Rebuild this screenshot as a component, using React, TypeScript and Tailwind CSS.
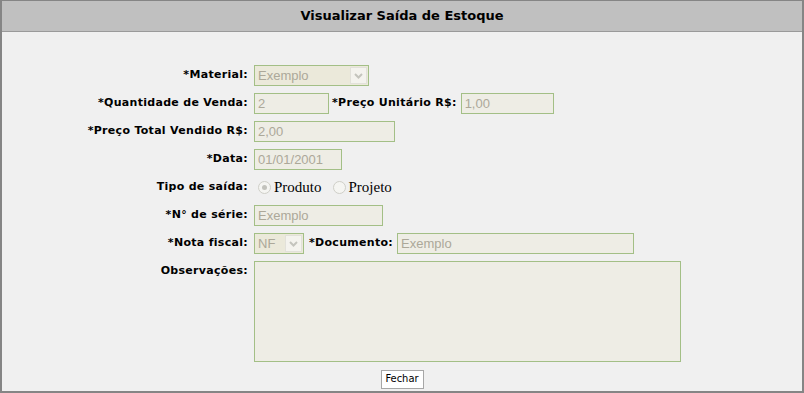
import React from "react";

const labelCls =
  "w-[246px] shrink-0 text-right font-bold text-[11px] tracking-[0.3px] text-black";
const lblFont = { fontFamily: '"DejaVu Sans", Verdana, sans-serif' };
const inFont = { fontFamily: '"Liberation Sans", Arial, sans-serif' };

function Input({ w, value }: { w: number; value: string }) {
  return (
    <div
      className="h-[21px] border border-[#a3bf86] bg-[#eeede5] text-[13px] text-[#aca899] pl-[3px] leading-[19px] overflow-hidden whitespace-nowrap"
      style={{ width: w, ...inFont }}
    >
      {value}
    </div>
  );
}

function Select({ w, value }: { w: number; value: string }) {
  return (
    <div
      className="h-[21px] border border-[#a3bf86] bg-[#ebe9da] flex items-center justify-between pl-[3px] pr-[1px]"
      style={{ width: w, ...inFont }}
    >
      <span className="text-[13px] text-[#aca899] leading-[19px]">{value}</span>
      <div className="w-[17px] h-[17px] bg-[#f4f3ee] border border-[#e2e1da] flex items-center justify-center">
        <svg width="11" height="8" viewBox="0 0 11 8">
          <path d="M2 2 L5.5 5.5 L9 2" fill="none" stroke="#c4c4bd" strokeWidth="2" />
        </svg>
      </div>
    </div>
  );
}

function Radio({ checked, label }: { checked?: boolean; label: string }) {
  return (
    <div className="flex items-center">
      <span className="w-[13px] h-[13px] rounded-full border border-[#cfcfc8] bg-[#f5f5f2] flex items-center justify-center">
        {checked && <span className="w-[5px] h-[5px] rounded-full bg-[#c2c2bc]" />}
      </span>
      <span
        className="ml-[3px] text-[15px] text-black leading-none"
        style={{ fontFamily: '"Liberation Serif", "Times New Roman", serif' }}
      >
        {label}
      </span>
    </div>
  );
}

export default function App() {
  return (
    <div className="w-[804px] h-[393px] bg-[#f0f0f0] border-2 border-t border-[#858585] flex flex-col overflow-hidden">
      <div className="h-[31px] shrink-0 bg-[#c0c0c0] border-b border-[#9a9a9a] flex items-center justify-center">
        <span className="text-[13px] font-bold text-black" style={lblFont}>
          Visualizar Saída de Estoque
        </span>
      </div>
      <div className="flex flex-col gap-[7px] pt-[33px]" style={lblFont}>
        <div className="flex items-center h-[21px]">
          <div className={labelCls}>*Material:</div>
          <div className="ml-[6px]">
            <Select w={115} value="Exemplo" />
          </div>
        </div>
        <div className="flex items-center h-[21px]">
          <div className={labelCls}>*Quantidade de Venda:</div>
          <div className="ml-[6px]">
            <Input w={75} value="2" />
          </div>
          <div className="ml-[3px] font-bold text-[11px] tracking-[0.3px]">*Preço Unitário R$:</div>
          <div className="ml-[4px]">
            <Input w={93} value="1,00" />
          </div>
        </div>
        <div className="flex items-center h-[21px]">
          <div className={labelCls}>*Preço Total Vendido R$:</div>
          <div className="ml-[6px]">
            <Input w={141} value="2,00" />
          </div>
        </div>
        <div className="flex items-center h-[21px]">
          <div className={labelCls}>*Data:</div>
          <div className="ml-[6px]">
            <Input w={88} value="01/01/2001" />
          </div>
        </div>
        <div className="flex items-center h-[21px]">
          <div className={labelCls}>Tipo de saída:</div>
          <div className="ml-[10px] flex items-center gap-[11px]">
            <Radio checked label="Produto" />
            <Radio label="Projeto" />
          </div>
        </div>
        <div className="flex items-center h-[21px]">
          <div className={labelCls}>*N° de série:</div>
          <div className="ml-[6px]">
            <Input w={129} value="Exemplo" />
          </div>
        </div>
        <div className="flex items-center h-[21px]">
          <div className={labelCls}>*Nota fiscal:</div>
          <div className="ml-[6px]">
            <Select w={50} value="NF" />
          </div>
          <div className="ml-[5px] font-bold text-[11px] tracking-[0.3px]">*Documento:</div>
          <div className="ml-[4px]">
            <Input w={237} value="Exemplo" />
          </div>
        </div>
        <div className="flex items-start">
          <div className={labelCls + " pt-[2px]"}>Observações:</div>
          <div className="ml-[6px] w-[427px] h-[101px] border border-[#a3bf86] bg-[#eeede5]" />
        </div>
      </div>
      <div className="flex justify-center mt-[8px]">
        <div
          className="w-[43px] h-[19px] bg-white border border-[#a7a7a7] text-[11px] text-black flex items-center justify-center"
          style={{ fontFamily: '"DejaVu Sans Condensed", "DejaVu Sans", sans-serif' }}
        >
          Fechar
        </div>
      </div>
    </div>
  );
}
